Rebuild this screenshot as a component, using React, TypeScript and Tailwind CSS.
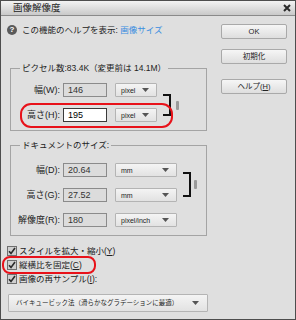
import type { ReactNode } from "react";

function Field({ value, active = false }: { value: string; active?: boolean }) {
  return (
    <div
      className={`ml-[3px] flex h-[14px] w-[44px] items-center border px-[4px] text-[9px] leading-none ${
        active ? "border-[#3a3a3a] bg-white text-black" : "border-[#8b8b8b] bg-[#dcdcdc] text-[#333]"
      }`}
    >
      {value}
    </div>
  );
}

function Caret() {
  return (
    <svg width="7" height="4" viewBox="0 0 7 4" className="shrink-0">
      <path d="M0 0h7L3.5 4z" fill="#555" />
    </svg>
  );
}

function Select({ label, wide = false }: { label: string; wide?: boolean }) {
  return (
    <div
      className={`ml-[8px] flex h-[14px] items-center justify-between rounded-[1px] border border-[#b4b4b4] bg-gradient-to-b from-[#f4f4f4] to-[#e2e2e2] pl-[5px] pr-[7px] text-[7px] leading-none text-[#222] ${
        wide ? "w-[62px]" : "w-[42px]"
      }`}
    >
      <span>{label}</span>
      <Caret />
    </div>
  );
}

function Row({
  label,
  value,
  unit,
  wide,
  active,
}: {
  label: ReactNode;
  value: string;
  unit: string;
  wide?: boolean;
  active?: boolean;
}) {
  return (
    <div className="flex items-center">
      <div className="w-[49px] text-right text-[9px] leading-none text-[#222]">{label}</div>
      <Field value={value} active={active} />
      <Select label={unit} wide={wide} />
    </div>
  );
}

function Checkbox({ children }: { children: ReactNode }) {
  return (
    <div className="flex h-[14px] items-center">
      <div className="flex h-[10px] w-[10px] items-center justify-center border border-[#6f6f6f] bg-[#cfcfcf]">
        <svg width="8" height="8" viewBox="0 0 8 8">
          <path d="M1 4.2 3 6.4 7 1" fill="none" stroke="#2b2b2b" strokeWidth="1.6" />
        </svg>
      </div>
      <span className="ml-[2px] text-[8.5px] leading-none text-[#222]">{children}</span>
    </div>
  );
}

function Button({ children }: { children: ReactNode }) {
  return (
    <button className="flex h-[15px] w-[66px] items-center justify-center rounded-[2px] border border-[#a9a9a9] bg-gradient-to-b from-[#f6f6f6] to-[#dedede] text-[7.5px] leading-none text-[#222]">
      {children}
    </button>
  );
}

export default function App() {
  return (
    <div className="relative flex h-[320px] w-[296px] flex-col overflow-hidden border border-[#4d4d4d] bg-[#dfdfdf] font-['Liberation_Sans','Noto_Sans_CJK_JP',sans-serif]">
      {/* title bar */}
      <div className="flex h-[15px] shrink-0 items-center justify-between border-b border-[#8a8a8a] bg-gradient-to-b from-[#f3f3f3] to-[#c9c9c9] pl-[12px] pr-[4px]">
        <span className="text-[9.5px] leading-none text-[#222]">画像解像度</span>
        <svg width="8" height="8" viewBox="0 0 8 8">
          <path d="M1 1l6 6M7 1 1 7" stroke="#2a2a2a" strokeWidth="2" />
        </svg>
      </div>

      <div className="flex">
        {/* left column */}
        <div className="flex w-[212px] flex-col pl-[6px]">
          <div className="mt-[8px] flex h-[12px] items-center">
            <div className="flex h-[10px] w-[10px] items-center justify-center rounded-full bg-[#5a5a5a] text-[8px] font-bold leading-none text-white">
              ?
            </div>
            <span className="ml-[5px] text-[8.5px] leading-none text-[#222]">
              この機能のヘルプを表示: <span className="text-[#3b8ee0]">画像サイズ</span>
            </span>
          </div>

          <fieldset className="ml-[3px] mt-[26px] w-[197px] border border-[#a4a4a4]">
            <legend className="ml-[9px] px-[2px] text-[8.5px] leading-[12px] text-[#222]">
              ピクセル数:83.4K（変更前は 14.1M）
            </legend>
            <div className="flex pb-[8px] pt-[9px]">
              <div className="flex flex-col gap-[11px]">
                <Row label="幅(W):" value="146" unit="pixel" />
                <Row label="高さ(H):" value="195" unit="pixel" active />
              </div>
              <div className="ml-[6px] mt-[11px] h-[22px] w-[8px] border-y-2 border-r-2 border-[#111]" />
              <div className="ml-[5px] mt-[18px] h-[9px] w-[3px] rounded-[1px] bg-[#9a9a9a]" />
            </div>
          </fieldset>

          <fieldset className="ml-[3px] mt-[8px] w-[197px] border border-[#a4a4a4]">
            <legend className="ml-[9px] px-[2px] text-[8.5px] leading-[12px] text-[#222]">
              ドキュメントのサイズ:
            </legend>
            <div className="flex pb-[8px] pt-[12px]">
              <div className="flex flex-col gap-[11px]">
                <Row label="幅(D):" value="20.64" unit="mm" wide />
                <Row label="高さ(G):" value="27.52" unit="mm" wide />
                <Row label="解像度(R):" value="180" unit="pixel/inch" wide />
              </div>
              <div className="ml-[6px] mt-[9px] h-[25px] w-[8px] border-y-2 border-r-2 border-[#111]" />
              <div className="ml-[3px] mt-[17px] h-[9px] w-[3px] rounded-[1px] bg-[#9a9a9a]" />
            </div>
          </fieldset>

          <div className="mt-[8px] flex flex-col">
            <Checkbox>
              スタイルを拡大・縮小(<span className="underline">Y</span>)
            </Checkbox>
            <Checkbox>
              縦横比を固定(<span className="underline">C</span>)
            </Checkbox>
            <Checkbox>
              画像の再サンプル(<span className="underline">I</span>):
            </Checkbox>
          </div>

          <div className="ml-[1px] mt-[8px] flex h-[18px] w-[200px] items-center justify-between rounded-[1px] border border-[#b4b4b4] bg-gradient-to-b from-[#f4f4f4] to-[#e2e2e2] pl-[7px] pr-[8px]">
            <span className="text-[6.5px] leading-none text-[#222]">
              バイキュービック法（滑らかなグラデーションに最適）
            </span>
            <Caret />
          </div>
        </div>

        {/* right column */}
        <div className="ml-[8px] flex flex-col pt-[8px]">
          <Button>OK</Button>
          <div className="mt-[10px]">
            <Button>初期化</Button>
          </div>
          <div className="mt-[15px]">
            <Button>
              ヘルプ(<span className="underline">H</span>)
            </Button>
          </div>
        </div>
      </div>

      {/* red annotation marks */}
      <div className="pointer-events-none absolute left-[19px] top-[102px] h-[25px] w-[153px] rounded-[11px] border-2 border-[#e8121a]" />
      <div className="pointer-events-none absolute left-[1px] top-[255px] h-[18px] w-[94px] rounded-[8px] border-2 border-[#e8121a]" />
    </div>
  );
}
